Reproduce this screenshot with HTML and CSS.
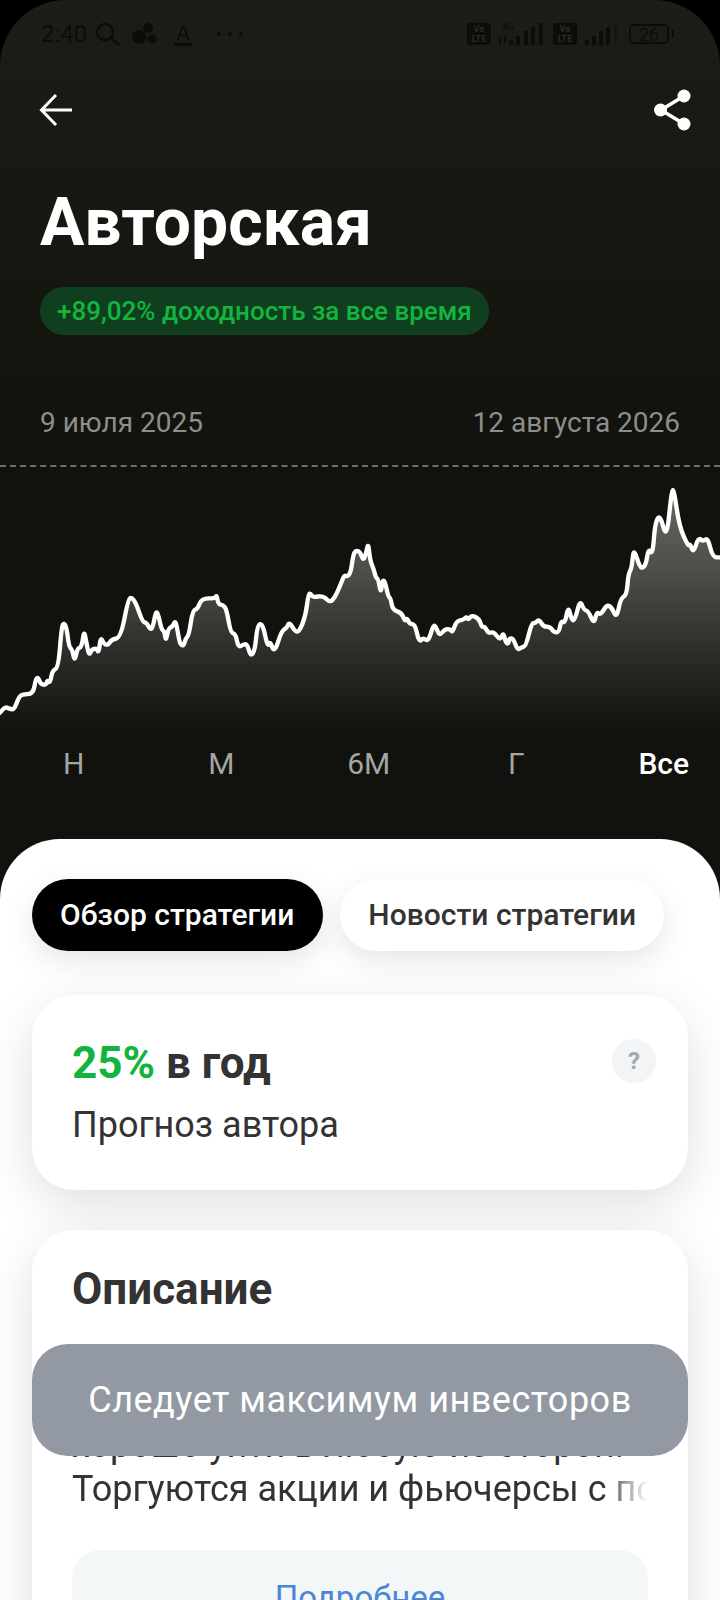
FILE: index.html
```html
<!DOCTYPE html>
<html lang="ru">
<head>
  <meta charset="UTF-8">
  <title>Авторская</title>
  <link rel="stylesheet" href="styles.css">
</head>
<body>

  <div class="screen">

    <div class="status">
      <div class="status-left">
        <span class="time">2:40</span>
        <svg width="26" height="24" viewBox="0 0 26 24" class="ic-search">
          <circle cx="10" cy="10" r="8" fill="none" stroke="#0c0c09" stroke-width="2.4"/>
          <path d="M16 16l8 7" stroke="#0c0c09" stroke-width="2.6" fill="none"/>
        </svg>
        <svg width="26" height="22" viewBox="0 0 26 22" class="ic-dots">
          <circle cx="7" cy="14" r="7" fill="#0c0c09"/>
          <circle cx="16" cy="5" r="5" fill="#0c0c09"/>
          <circle cx="20" cy="16" r="4.5" fill="#0c0c09"/>
        </svg>
        <span class="ic-letter">A</span>
        <span class="more"><i></i><i></i><i></i></span>
      </div>
      <div class="status-right">
        <span class="volte">Vo<br>LTE</span>
        <svg width="48" height="24" viewBox="0 0 48 24" class="ic-net">
          <text x="4" y="8" class="net-label">4G</text>
          <path d="M2 15v7M7 14v7" stroke="#0c0c09" stroke-width="2" fill="none"/>
          <g fill="#0c0c09">
            <rect x="11" y="18" width="4" height="5"/>
            <rect x="18" y="14" width="4" height="9"/>
            <rect x="26" y="9" width="4" height="14"/>
            <rect x="33" y="5" width="4" height="18"/>
            <rect x="41" y="1" width="4" height="22"/>
          </g>
        </svg>
        <span class="volte">Vo<br>LTE</span>
        <svg width="34" height="24" viewBox="0 0 34 24" class="ic-net">
          <g fill="#0c0c09">
            <rect x="1" y="18" width="4" height="5"/>
            <rect x="8" y="14" width="4" height="9"/>
            <rect x="15" y="9" width="4" height="14"/>
            <rect x="22" y="5" width="4" height="18"/>
            <rect x="30" y="1" width="3" height="22" opacity="0.4"/>
          </g>
        </svg>
        <span class="battery">26</span>
      </div>
    </div>

    <div class="toolbar">
      <svg width="34" height="34" viewBox="0 0 34 34">
        <path d="M33 17H3M17 2L2.500 17L17 32" fill="none" stroke="#fff" stroke-width="3"/>
      </svg>
      <svg width="38" height="42" viewBox="0 0 38 42">
        <path d="M30 7L7 21L30 35" fill="none" stroke="#fff" stroke-width="3.600"/>
        <circle cx="30" cy="7" r="6.500" fill="#fff"/>
        <circle cx="6.500" cy="21" r="6.500" fill="#fff"/>
        <circle cx="30" cy="35" r="6.500" fill="#fff"/>
      </svg>
    </div>

    <h1>Авторская</h1>
    <div class="badge">+89,02% доходность за все время</div>

    <div class="dates">
      <span>9 июля 2025</span>
      <span>12 августа 2026</span>
    </div>

    <div class="chart">
      <svg width="720" height="265" viewBox="0 45 2160 795">
        <defs>
          <linearGradient id="area" gradientUnits="userSpaceOnUse" x1="0" y1="120" x2="0" y2="830">
            <stop offset="0" stop-color="#fff" stop-opacity="0.36"/>
            <stop offset="0.35" stop-color="#fff" stop-opacity="0.25"/>
            <stop offset="0.7" stop-color="#fff" stop-opacity="0.11"/>
            <stop offset="1" stop-color="#fff" stop-opacity="0.01"/>
          </linearGradient>
        </defs>
        <path id="chartFill" fill="url(#area)"></path>
        <path id="chartLine" fill="none" stroke="#fff" stroke-width="13" stroke-linejoin="round" stroke-linecap="round"></path>
      </svg>
    </div>

    <div class="periods">
      <span>Н</span>
      <span>М</span>
      <span>6М</span>
      <span>Г</span>
      <span class="active">Все</span>
    </div>

    <div class="sheet">
      <div class="tabs">
        <div class="tab tab-active">Обзор стратегии</div>
        <div class="tab">Новости стратегии</div>
      </div>

      <div class="card forecast">
        <div class="forecast-head">
          <div class="forecast-value"><span class="green">25%</span> в год</div>
          <div class="help">?</div>
        </div>
        <div class="forecast-label">Прогноз автора</div>
      </div>

      <div class="card about">
        <h2>Описание</h2>
        <div class="about-text">
          <div class="about-line">хорошо уйти в любую из сторон.</div>
          <div class="about-line about-fade">Торгуются акции и фьючерсы с по</div>
        </div>
        <div class="more-btn">Подробнее</div>
      </div>
    </div>

    <div class="toast">Следует максимум инвесторов</div>
  </div>

  <script>
    // chart points, traced at 3x
    const points = [
      [0,788],[15,770],[25,775],[42,780],[55,745],[65,733],[100,732],[107,685],[115,683],[122,703],[138,705],[142,690],[150,700],[157,662],[175,653],
      [185,530],[192,518],[200,535],[207,590],[217,600],[224,635],[232,595],[245,592],[252,542],[258,570],[267,618],[275,598],[290,595],[296,610],[302,560],
      [312,583],[325,585],[335,568],[362,563],[385,447],[395,442],[408,460],[428,516],[440,518],[450,538],[458,535],[468,482],[475,495],[485,540],[493,543],
      [498,575],[505,535],[518,530],[527,508],[538,575],[545,587],[552,585],[557,565],[567,555],[578,480],[592,478],[605,445],[645,445],[650,435],[655,463],
      [670,465],[680,480],[692,548],[707,552],[715,593],[730,583],[742,582],[752,620],[765,600],[772,525],[788,520],[803,592],[810,572],[823,610],[845,542],
      [860,535],[868,515],[885,545],[898,545],[917,497],[925,432],[932,430],[938,442],[970,437],[990,458],[1005,442],[1020,408],[1033,375],[1040,380],[1052,370],
      [1060,312],[1068,302],[1080,305],[1090,333],[1098,310],[1105,278],[1110,330],[1122,360],[1128,385],[1135,385],[1142,432],[1148,390],[1155,395],[1165,440],
      [1172,445],[1178,480],[1205,488],[1215,515],[1220,503],[1230,523],[1245,522],[1257,577],[1270,563],[1285,575],[1300,525],[1308,530],[1318,558],[1335,537],
      [1352,538],[1357,548],[1370,512],[1390,510],[1400,500],[1405,510],[1415,495],[1438,507],[1445,532],[1455,530],[1465,550],[1482,545],[1500,572],[1510,546],
      [1517,578],[1525,582],[1528,565],[1540,565],[1552,600],[1565,592],[1578,588],[1595,518],[1605,520],[1617,507],[1630,530],[1650,530],[1662,547],[1677,547],
      [1683,512],[1695,520],[1705,467],[1715,512],[1725,510],[1740,450],[1752,480],[1765,483],[1782,523],[1790,485],[1802,495],[1820,464],[1835,472],[1850,505],
      [1862,445],[1880,435],[1885,372],[1895,355],[1900,302],[1908,315],[1922,358],[1938,345],[1945,295],[1958,315],[1965,220],[1980,192],[2000,270],[2015,120],
      [2022,120],[2038,230],[2065,290],[2070,280],[2080,310],[2095,262],[2110,275],[2123,262],[2138,322],[2160,322]
    ];

    function buildLine(pts) {
      let d = "M" + pts[0][0] + " " + pts[0][1];
      for (let i = 1; i < pts.length - 1; i++) {
        const mx = (pts[i][0] + pts[i + 1][0]) / 2;
        const my = (pts[i][1] + pts[i + 1][1]) / 2;
        d += "Q" + pts[i][0] + " " + pts[i][1] + " " + mx + " " + my;
      }
      const last = pts[pts.length - 1];
      return d + "L" + last[0] + " " + last[1];
    }

    const line = buildLine(points);
    document.getElementById("chartLine").setAttribute("d", line);
    document.getElementById("chartFill").setAttribute("d", line + "L2160 840L0 840Z");
  </script>

</body>
</html>
```

FILE: styles.css
```css
html, body {
  margin: 0;
  padding: 0;
  background-color: #000;
}

body {
  font-family: Roboto, "Liberation Sans", sans-serif;
}

.screen {
  position: relative;
  width: 720px;
  height: 1600px;
  overflow: hidden;
  border-radius: 66px 66px 0 0;
  background: linear-gradient(#1d1d18 0, #191914 150px, #161611 300px, #11110d 460px, #11110d 100%);
}

.status {
  display: flex;
  justify-content: space-between;
  height: 46px;
  padding: 22px 51px 0 41px;
  box-sizing: content-box;
  color: #0c0c09;
}

.status-left, .status-right {
  display: flex;
  align-items: center;
  height: 24px;
}

.time {
  font-size: 24px;
  width: 54px;
}

.ic-dots {
  margin-left: 11px;
}

.ic-letter {
  margin-left: 16px;
  width: 18px;
  font-size: 21px;
  line-height: 20px;
  text-align: center;
  border-bottom: 3px solid #0c0c09;
}

.more {
  display: flex;
  gap: 7px;
  margin-left: 25px;
}

.more i {
  width: 4px;
  height: 4px;
  border-radius: 50%;
  background-color: #0c0c09;
}

.volte {
  width: 24px;
  height: 21px;
  padding-top: 1px;
  border-radius: 3px;
  background-color: #0c0c09;
  color: #2b2b26;
  font-size: 9px;
  font-weight: bold;
  line-height: 10px;
  text-align: center;
}

.ic-net {
  margin-left: 7px;
}

.ic-net + .volte {
  margin-left: 7px;
}

.net-label {
  font-size: 10px;
  fill: #0c0c09;
}

.battery {
  position: relative;
  width: 40px;
  height: 20px;
  margin-left: 11px;
  border: 2px solid #0c0c09;
  border-radius: 5px;
  box-sizing: border-box;
  font-size: 18px;
  line-height: 17px;
  text-align: center;
}

.battery::after {
  content: "";
  position: absolute;
  top: 4px;
  right: -7px;
  width: 2px;
  height: 8px;
  background-color: #0c0c09;
}

.toolbar {
  display: flex;
  justify-content: space-between;
  align-items: center;
  height: 42px;
  padding: 21px 28px 0 39px;
}

h1 {
  margin: 52px 0 0 40px;
  font-size: 66px;
  font-weight: bold;
  line-height: 80px;
  color: #fff;
}

.badge {
  width: fit-content;
  margin: 24px 0 0 40px;
  padding: 0 17px;
  height: 48px;
  border-radius: 24px;
  background-color: #0f3f1e;
  color: #14b53f;
  font-size: 26px;
  font-weight: 500;
  line-height: 48px;
}

.dates {
  display: flex;
  justify-content: space-between;
  margin-top: 72px;
  padding: 0 40px;
  color: #8e8e8c;
  font-size: 28px;
  line-height: 32px;
}

.chart {
  height: 265px;
  margin-top: 26px;
  border-top: 2px dashed #6e6e6b;
  margin-bottom: -2px;
}

.chart svg {
  display: block;
  margin-top: -2px;
}

.periods {
  display: grid;
  grid-template-columns: repeat(5, 147.500px);
  height: 68px;
  color: #a5a5a2;
  font-size: 30px;
  line-height: 68px;
  text-align: center;
}

.periods .active {
  color: #fff;
  font-weight: 500;
}

.sheet {
  height: 800px;
  margin-top: 41px;
  padding: 40px 32px 0;
  border-radius: 60px 60px 0 0;
  background-color: #fff;
}

.tabs {
  display: flex;
  gap: 17px;
}

.tab {
  height: 72px;
  padding: 0 28px;
  border-radius: 36px;
  background-color: #fff;
  box-shadow: 0 10px 30px rgba(0, 0, 0, 0.1);
  color: #333;
  font-size: 30px;
  font-weight: 500;
  line-height: 72px;
}

.tab-active {
  padding-right: 29px;
  background-color: #000;
  color: #fff;
}

.card {
  margin-top: 44px;
  padding: 0 40px;
  border-radius: 42px;
  background-color: #fff;
  box-shadow: 0 14px 50px rgba(0, 0, 0, 0.13);
  color: #333;
}

.forecast {
  height: 195px;
}

.forecast-head {
  display: flex;
  justify-content: space-between;
  padding-top: 44px;
}

.forecast-value {
  font-size: 44px;
  font-weight: bold;
  line-height: 48px;
}

.green {
  color: #12b43e;
}

.help {
  width: 44px;
  height: 44px;
  margin-right: -8px;
  border-radius: 50%;
  background-color: #f2f4f5;
  color: #a3a7b0;
  font-size: 24px;
  font-weight: bold;
  line-height: 44px;
  text-align: center;
}

.forecast-label {
  margin-top: 16px;
  font-size: 36px;
  line-height: 44px;
}

.about {
  height: 500px;
  margin-top: 40px;
}

h2 {
  margin: 0;
  padding-top: 35px;
  font-size: 44px;
  font-weight: bold;
  line-height: 48px;
}

.about-text {
  margin-top: 110px;
  font-size: 36px;
  line-height: 44px;
}

.about-line {
  white-space: nowrap;
  overflow: hidden;
}

.about-fade {
  -webkit-mask-image: linear-gradient(to right, #000 92%, transparent 100%);
  mask-image: linear-gradient(to right, #000 92%, transparent 100%);
}

.more-btn {
  height: 100px;
  margin-top: 39px;
  border-radius: 28px;
  background-color: #f4f7f7;
  color: #4a86d8;
  font-size: 33px;
  line-height: 95px;
  text-align: center;
}

.toast {
  position: absolute;
  left: 32px;
  top: 1344px;
  width: 656px;
  height: 112px;
  border-radius: 36px;
  background-color: #9299a2;
  color: #fff;
  font-size: 36px;
  letter-spacing: 0.5px;
  line-height: 112px;
  text-align: center;
}
```
